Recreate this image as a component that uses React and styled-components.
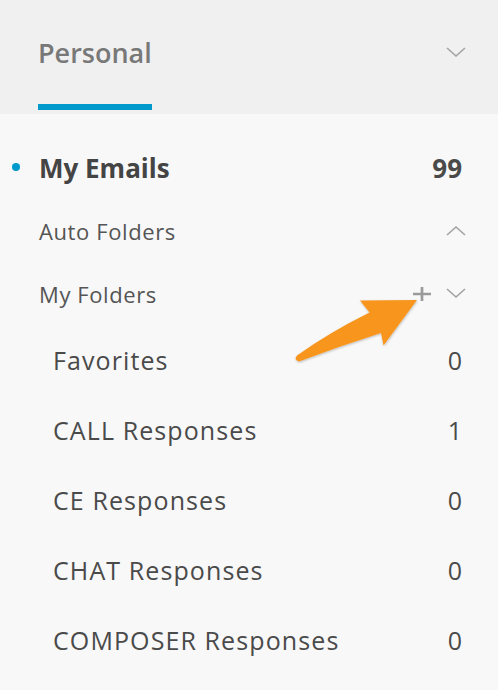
import styled, { createGlobalStyle } from "styled-components";

const GlobalStyle = createGlobalStyle`
    body {
        margin: 0;
        background: #f8f8f8;
        font-family: "Open Sans", Lato, sans-serif;
    }
`;

const Panel = styled.div`
    width: 498px;
    height: 690px;
    position: relative;
    overflow: hidden;
    background: #f8f8f8;
`;

const Header = styled.div`
    height: 114px;
    background: #f0f0f0;
    display: flex;
    align-items: flex-end;
    justify-content: space-between;
    padding: 0 32px 0 38px;
    box-sizing: border-box;
`;

const Tab = styled.div`
    font-size: 27px;
    font-weight: 600;
    color: #787878;
    padding-bottom: 35px;
    border-bottom: 6px solid #0099cc;
    margin-bottom: 4px;
    line-height: 32px;
`;

const HeaderChevron = styled.div`
    align-self: flex-start;
    margin-top: 47px;
    display: flex;
`;

const List = styled.div`
    padding: 22px 36px 0 0;
`;

const Row = styled.div`
    display: flex;
    align-items: center;
    justify-content: space-between;
    height: ${p => p.$h}px;
    padding-left: ${p => p.$indent}px;
    position: relative;
`;

const Label = styled.span`
    font-size: ${p => p.$size}px;
    font-weight: ${p => p.$bold ? 700 : 400};
    letter-spacing: ${p => p.$spacing || 0}px;
    color: ${p => p.$color || "#4a4a4a"};
`;

const Count = styled.span`
    font-size: ${p => p.$size}px;
    font-weight: ${p => p.$bold ? 700 : 400};
    color: #4a4a4a;
`;

const Dot = styled.span`
    position: absolute;
    left: 12px;
    top: 50%;
    width: 8px;
    height: 8px;
    margin-top: -5px;
    border-radius: 50%;
    background: #0099cc;
`;

const Actions = styled.div`
    display: flex;
    align-items: center;
    gap: 15px;
    margin-right: -4px;
`;

const Arrow = styled.svg`
    position: absolute;
    left: 0;
    top: 0;
    pointer-events: none;
`;

function Chevron({ up }) {
    return (
        <svg width="20" height="11" viewBox="0 0 20 11">
            <polyline points={up ? "1,10 10,2 19,10" : "1,1 10,9 19,1"} fill="none" stroke="#a3a3a3" strokeWidth="1.6" />
        </svg>
    );
}

function Plus() {
    return (
        <svg width="18" height="16" viewBox="0 0 18 16">
            <path d="M9 1v14M0 8h18" stroke="#9a9a9a" strokeWidth="2.7" />
        </svg>
    );
}

const folders = [
    { name: "Favorites", count: 0 },
    { name: "CALL Responses", count: 1 },
    { name: "CE Responses", count: 0 },
    { name: "CHAT Responses", count: 0 },
    { name: "COMPOSER Responses", count: 0 },
];

export default function App() {
    return (
        <Panel>
            <GlobalStyle />
            <Header>
                <Tab>Personal</Tab>
                <HeaderChevron><Chevron /></HeaderChevron>
            </Header>
            <List>
                <Row $h={63} $indent={39}>
                    <Dot />
                    <Label $size={26} $bold $color="#444">My Emails</Label>
                    <Count $size={26} $bold>99</Count>
                </Row>
                <Row $h={63} $indent={39}>
                    <Label $size={22} $spacing={0.6} $color="#555">Auto Folders</Label>
                    <Actions><Chevron up /></Actions>
                </Row>
                <Row $h={63} $indent={39}>
                    <Label $size={22} $spacing={0.6} $color="#555">My Folders</Label>
                    <Actions>
                        <Plus />
                        <Chevron />
                    </Actions>
                </Row>
                {folders.map(f => (
                    <Row key={f.name} $h={70} $indent={53}>
                        <Label $size={25} $spacing={1.1}>{f.name}</Label>
                        <Count $size={25}>{f.count}</Count>
                    </Row>
                ))}
            </List>
            <Arrow width="498" height="690" viewBox="0 0 498 690">
                <defs>
                    <filter id="shadow" x="-10%" y="-10%" width="130%" height="130%">
                        <feDropShadow dx="0.5" dy="1" stdDeviation="1" floodColor="#000" floodOpacity="0.25" />
                    </filter>
                </defs>
                <path
                    d="M417 300 L360 300.5 L369.5 312.5 Q330 332 297 355.5 Q293.5 360 299 361.5 Q340 346 381 333 L383.5 345.5 Z"
                    fill="#f7951d"
                    filter="url(#shadow)"
                />
            </Arrow>
        </Panel>
    );
}
